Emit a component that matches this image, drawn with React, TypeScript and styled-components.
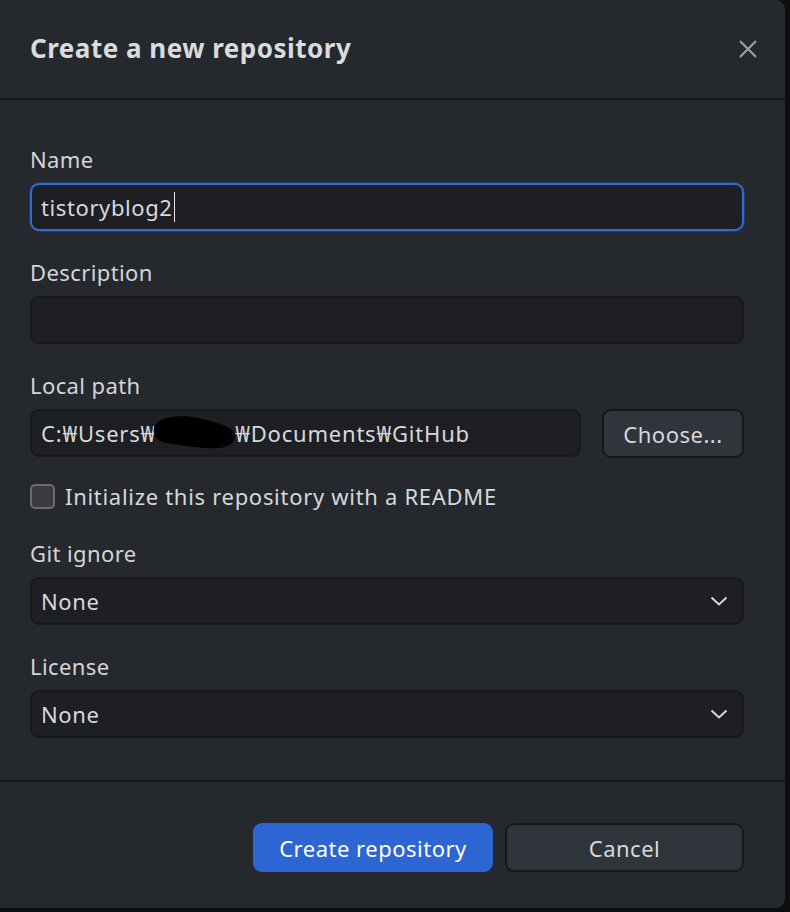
import styled, { createGlobalStyle } from "styled-components";

const GlobalStyle = createGlobalStyle`
  html, body {
    margin: 0;
    padding: 0;
    background: #0d0e10;
  }
  body {
    font-family: "Noto Sans", "Noto Sans CJK KR", sans-serif;
    color: #d6d8dc;
  }
`;

const Dialog = styled.div`
  width: 785px;
  height: 908px;
  background: #25282d;
  border-radius: 0 9px 9px 0;
  display: flex;
  flex-direction: column;
  box-sizing: border-box;
`;

const Header = styled.header`
  height: 98px;
  border-bottom: 2px solid #17181b;
  display: flex;
  align-items: center;
  justify-content: space-between;
  padding: 0 26px 0 30px;
`;

const Title = styled.h1`
  margin: 0;
  font-size: 26px;
  font-weight: 700;
  color: #d9dbdf;
  letter-spacing: 0.5px;
  padding-bottom: 2px;
`;

const CloseButton = styled.button`
  background: none;
  border: none;
  padding: 0;
  width: 22px;
  height: 22px;
  display: flex;
  align-items: center;
  justify-content: center;
  cursor: pointer;
`;

const Body = styled.div`
  padding: 46px 41px 42px 30px;
  display: flex;
  flex-direction: column;
  border-bottom: 2px solid #17181b;
`;

const Field = styled.div<{ $gap?: number }>`
  display: flex;
  flex-direction: column;
  margin-bottom: ${(p) => p.$gap ?? 28}px;
`;

const Label = styled.label`
  font-size: 22px;
  letter-spacing: 0.4px;
  line-height: 26px;
  color: #d3d5d9;
  margin-bottom: 11px;
`;

const Input = styled.div<{ $focused?: boolean }>`
  height: 48px;
  flex-shrink: 0;
  box-sizing: border-box;
  background: #1d1f23;
  border: 2px solid ${(p) => (p.$focused ? "#2f6ad8" : "#18191c")};
  box-shadow: ${(p) => (p.$focused ? "0 0 0 1px rgba(47,106,216,0.25)" : "none")};
  border-radius: 9px;
  display: flex;
  align-items: center;
  padding: 0 9px;
  font-size: 22px;
  letter-spacing: 0.6px;
  color: #d6d8dc;
  white-space: nowrap;
`;

const PathInput = styled(Input)`
  flex: 1;
  letter-spacing: 0.8px;
`;

const Caret = styled.span`
  display: inline-block;
  width: 1.5px;
  height: 30px;
  background: #e4e6ea;
  margin-left: 1px;
`;

const Row = styled.div`
  display: flex;
  gap: 21px;
`;

const Blob = styled.svg`
  width: 84px;
  height: 34px;
  margin: 0 -1px 0 -4px;
  flex-shrink: 0;
`;

const Button = styled.button<{ $primary?: boolean; $width: number }>`
  width: ${(p) => p.$width}px;
  height: 49px;
  flex-shrink: 0;
  box-sizing: border-box;
  border-radius: 9px;
  border: 2px solid ${(p) => (p.$primary ? "#2d66d2" : "#17181b")};
  background: ${(p) => (p.$primary ? "#2d66d2" : "#30343b")};
  color: ${(p) => (p.$primary ? "#ffffff" : "#d6d8dc")};
  font-family: "Noto Sans", "Noto Sans CJK KR", sans-serif;
  font-size: 22px;
  letter-spacing: 0.5px;
  padding: 0;
  cursor: pointer;
`;

const CheckRow = styled.label`
  display: flex;
  align-items: center;
  gap: 10px;
  height: 25px;
  line-height: 25px;
  margin-top: -1px;
  margin-bottom: 31px;
  font-size: 22px;
  letter-spacing: 0.7px;
  color: #d6d8dc;
`;

const Checkbox = styled.span`
  width: 25px;
  height: 25px;
  box-sizing: border-box;
  border: 2px solid #6b6c70;
  background: #3b3b3e;
  border-radius: 5px;
`;

const Select = styled(Input)`
  justify-content: space-between;
  padding-right: 14px;
`;

const Footer = styled.footer`
  display: flex;
  justify-content: flex-end;
  gap: 12px;
  padding: 41px 41px 0 0;
`;

const Chevron = () => (
  <svg width="18" height="12" viewBox="0 0 18 12">
    <path d="M1.5 2.5 L9 9.5 L16.5 2.5" fill="none" stroke="#d6d8dc" strokeWidth="2" />
  </svg>
);

export default function App() {
  return (
    <>
      <GlobalStyle />
      <Dialog>
        <Header>
          <Title>Create a new repository</Title>
          <CloseButton aria-label="Close">
            <svg width="20" height="20" viewBox="0 0 20 20">
              <path d="M2 2 L18 18 M18 2 L2 18" stroke="#9b9ea3" strokeWidth="2.2" />
            </svg>
          </CloseButton>
        </Header>
        <Body>
          <Field>
            <Label>Name</Label>
            <Input $focused>
              tistoryblog2
              <Caret />
            </Input>
          </Field>
          <Field>
            <Label>Description</Label>
            <Input />
          </Field>
          <Field $gap={27}>
            <Label>Local path</Label>
            <Row>
              <PathInput>
                C:₩Users₩
                <Blob viewBox="0 0 84 34">
                  <path
                    d="M6 6 C14 0 32 -1 46 2 C60 5 76 9 82 16 C85 24 80 31 67 32 C52 33 35 30 21 28 C10 27 3 24 2 17 C1 12 2 9 6 6 Z"
                    fill="#000"
                  />
                </Blob>
                ₩Documents₩GitHub
              </PathInput>
              <Button $width={142}>Choose...</Button>
            </Row>
          </Field>
          <CheckRow>
            <Checkbox />
            Initialize this repository with a README
          </CheckRow>
          <Field>
            <Label>Git ignore</Label>
            <Select>
              None
              <Chevron />
            </Select>
          </Field>
          <Field $gap={0}>
            <Label>License</Label>
            <Select>
              None
              <Chevron />
            </Select>
          </Field>
        </Body>
        <Footer>
          <Button $primary $width={240}>
            Create repository
          </Button>
          <Button $width={239}>Cancel</Button>
        </Footer>
      </Dialog>
    </>
  );
}
